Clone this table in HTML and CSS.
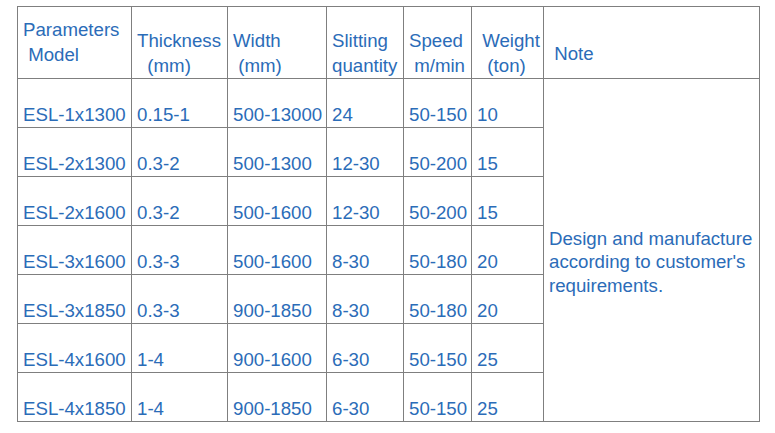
FILE: index.html
```html
<!DOCTYPE html>
<html>
<head>
<meta charset="utf-8">
<link rel="stylesheet" href="styles.css">
</head>
<body>
<table class="spec">
  <colgroup>
    <col class="c1"><col class="c2"><col class="c3"><col class="c4"><col class="c5"><col class="c6"><col class="c7">
  </colgroup>
  <tr class="head">
    <td class="mid">Parameters<br>&nbsp;Model</td>
    <td>Thickness<br>&nbsp;&nbsp;(mm)</td>
    <td>Width<br>&nbsp;(mm)</td>
    <td>Slitting<br>quantity</td>
    <td>Speed<br>&nbsp;m/min</td>
    <td>&nbsp;Weight<br>&nbsp;&nbsp;(ton)</td>
    <td class="mid"><div class="note-head">&nbsp;Note</div></td>
  </tr>
  <tr>
    <td>ESL-1x1300</td><td>0.15-1</td><td>500-13000</td><td>24</td><td>50-150</td><td>10</td>
    <td class="note" rowspan="7"><div class="note-text">Design and manufacture according to customer's requirements.</div></td>
  </tr>
  <tr><td>ESL-2x1300</td><td>0.3-2</td><td>500-1300</td><td>12-30</td><td>50-200</td><td>15</td></tr>
  <tr><td>ESL-2x1600</td><td>0.3-2</td><td>500-1600</td><td>12-30</td><td>50-200</td><td>15</td></tr>
  <tr><td>ESL-3x1600</td><td>0.3-3</td><td>500-1600</td><td>8-30</td><td>50-180</td><td>20</td></tr>
  <tr><td>ESL-3x1850</td><td>0.3-3</td><td>900-1850</td><td>8-30</td><td>50-180</td><td>20</td></tr>
  <tr><td>ESL-4x1600</td><td>1-4</td><td>900-1600</td><td>6-30</td><td>50-150</td><td>25</td></tr>
  <tr><td>ESL-4x1850</td><td>1-4</td><td>900-1850</td><td>6-30</td><td>50-150</td><td>25</td></tr>
</table>
</body>
</html>
```

FILE: styles.css
```css
html, body {
  margin: 0;
  padding: 0;
  background: #ffffff;
}

.spec {
  margin: 6px 0 0 17px;
  border-collapse: collapse;
  table-layout: fixed;
  width: 742px;
  font-family: "Liberation Sans", Arial, sans-serif;
  font-size: 18.67px;
  line-height: 24.5px;
  color: #2b6cb8;
}

.c1 { width: 114px; }
.c2 { width: 96px; }
.c3 { width: 99px; }
.c4 { width: 77px; }
.c5 { width: 68px; }
.c6 { width: 72px; }
.c7 { width: 216px; }

.spec td {
  border: 1px solid #7f7f7f;
  padding: 0 0 0 5px;
  height: 48px;
  vertical-align: bottom;
  white-space: nowrap;
  overflow: hidden;
}

.spec .head td {
  height: 71px;
}

.spec .head td.mid {
  vertical-align: middle;
}

.note-head {
  padding-top: 24px;
}

.spec td.note {
  white-space: normal;
  vertical-align: middle;
  padding: 0 4px 0 5px;
}

.note-text {
  padding-top: 24px;
  line-height: 23.5px;
}
```
